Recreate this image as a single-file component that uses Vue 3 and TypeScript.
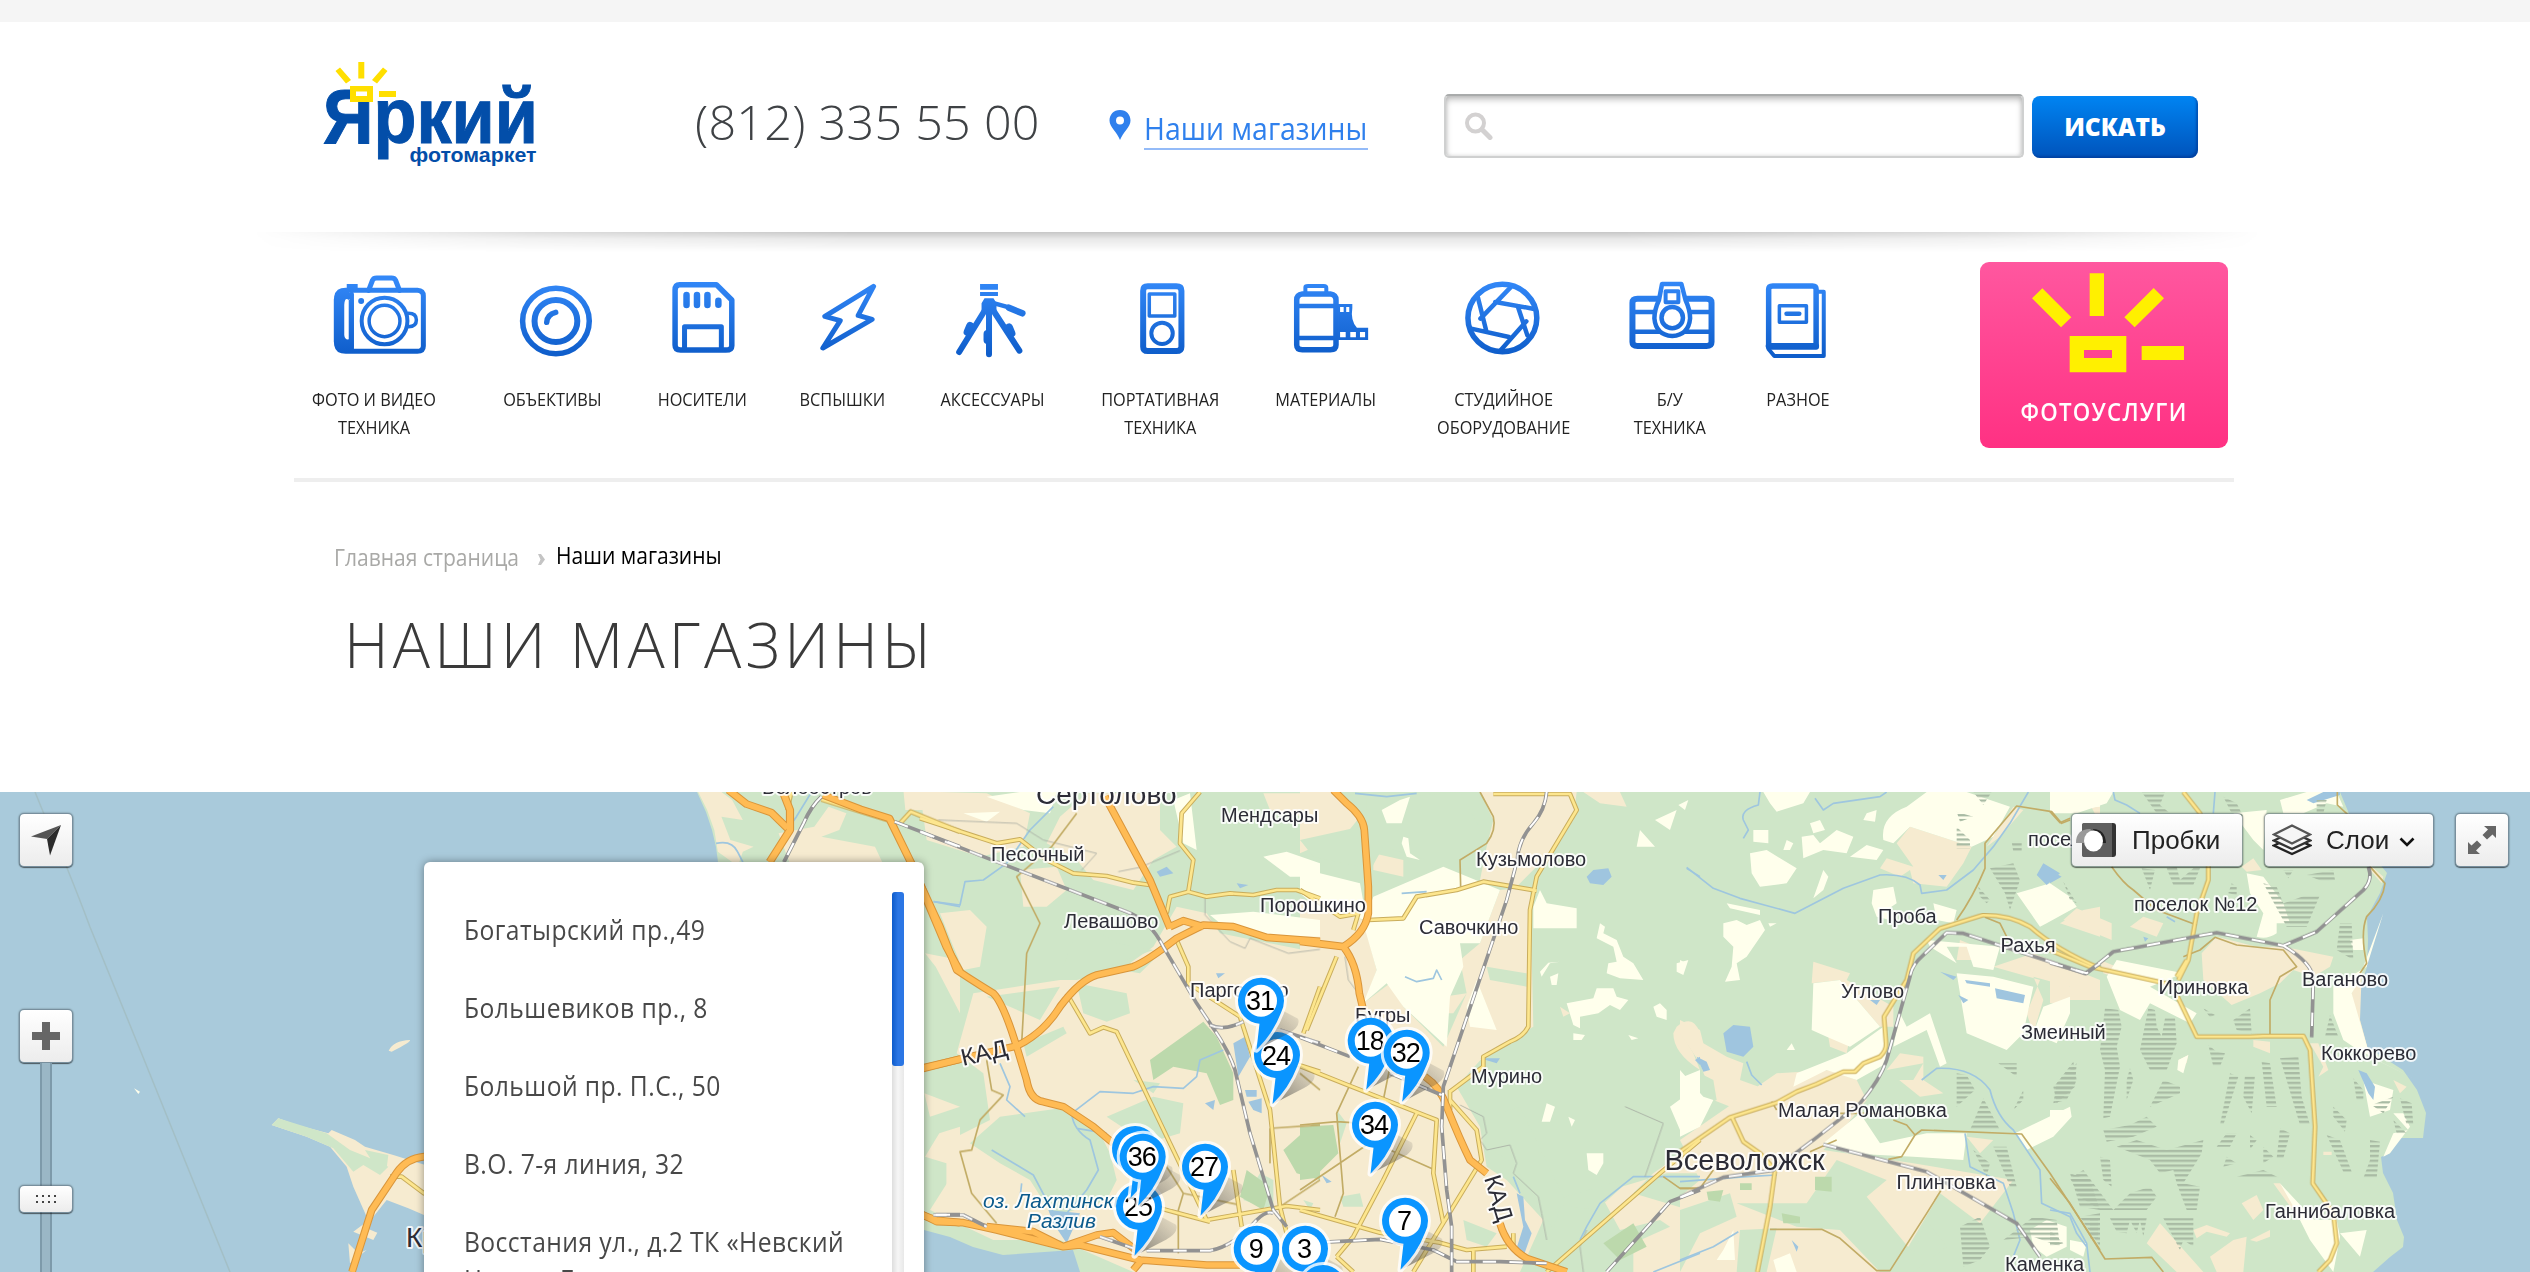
<script setup lang="ts">
interface IconPart {
  d: string
  w?: number
  fill?: string
}
interface Category {
  title: string
  box: string
  parts: IconPart[]
}
interface Sheet {
  at: string
  beige?: string
  green?: string
  cream?: string
  park?: string
  lake?: string
  river?: string
  marsh?: string
  street?: string
  road?: string
  highway?: string
  rail?: string
  border?: string
}

const oval = (x: number, y: number, rx: number, ry: number): string =>
  `M${x - rx} ${y}a${rx} ${ry} 0 1 0 ${rx * 2} 0a${rx} ${ry} 0 1 0 ${-rx * 2} 0Z`

const categories: Category[] = [
  {
    title: 'ФОТО И ВИДЕО ТЕХНИКА',
    box: '68.3 75 201 255',
    parts: [
      { d: 'M112 121H256Q268 122 268 138V288Q268 304 256 304H112Q96 304 94 286V140Q96 121 112 121Z', w: 5 },
      { d: 'M158 121L166 90Q168 84 174 84H204Q210 84 212 90L220 121', w: 5 },
      { d: 'M88 148Q90 118 112 120L128 136L118 150Q110 140 109 165V255Q110 270 118 268V150H128V290L118 306Q90 306 88 275Z', fill: 'ink' },
      { d: 'M114 102H136V121H114Z', fill: 'ink' },
      { d: 'M124 132V300', w: 4.5 },
      { d: oval(143, 153, 6, 9), fill: 'ink' },
      { d: oval(190, 213, 46, 70), w: 4 },
      { d: oval(190, 213, 31, 47), w: 3.5 },
      { d: 'M238 190Q254 190 254 210Q254 230 238 230', w: 3.5 },
    ],
  },
  {
    title: 'ОБЪЕКТИВЫ',
    box: '426.1 75 201 255',
    parts: [
      { d: oval(534.5, 213, 67, 98), w: 5.5 },
      { d: oval(534.5, 213, 43, 63), w: 6 },
      { d: 'M516 217Q517 193 534 187', w: 5.5 },
    ],
  },
  {
    title: 'НОСИТЕЛИ',
    box: '727.6 75 201 255',
    parts: [
      { d: 'M783 104H857L888 150V287Q888 300 876 300H785Q774 300 774 285V120Q774 104 783 104Z', w: 5.5 },
      { d: 'M797 135V165M818 135V165M839 135V165M861 152V164', w: 6.5 },
      { d: 'M793 298V230H867V298', w: 5 },
    ],
  },
  {
    title: 'ВСПЫШКИ',
    box: '1009 75 201 255',
    parts: [{ d: 'M1173 109L1075 199L1106 212L1071 294L1170 208L1142 196Z', w: 5 }],
  },
  {
    title: 'АКСЕССУАРЫ',
    box: '1310.5 75 201 255',
    parts: [
      { d: 'M1387 102H1423V119H1387ZM1387 126H1423V138H1387ZM1396 145H1414L1420 160V186H1390V160Z', fill: 'ink' },
      { d: 'M1397 180L1345 306M1405 180V313M1413 180L1466 302', w: 6 },
      { d: 'M1367 228L1362 246M1402 252V270M1445 232L1450 250', w: 8 },
      { d: 'M1416 160L1445 172', w: 4.5 },
      { d: 'M1445 173L1472 190', w: 6.5 },
    ],
  },
  {
    title: 'ПОРТАТИВНАЯ ТЕХНИКА',
    box: '98 75 196 255',
    parts: [
      { d: 'M172 109H228Q238 109 238 122V290Q238 303 228 303H172Q163 303 163 290V122Q163 109 172 109Z', w: 6 },
      { d: 'M175 132H225V198H175Z', w: 3.5 },
      { d: oval(200, 250, 21, 32), w: 4 },
    ],
  },
  {
    title: 'МАТЕРИАЛЫ',
    box: '423.4 75 196 255',
    parts: [
      { d: 'M475 132H530Q541 134 541 150V285Q541 299 530 299H475Q464 299 464 285V150Q464 134 475 132Z', w: 5.5 },
      { d: 'M464 168H541M464 264H541', w: 4.5 },
      { d: 'M481 130V112Q481 108 486 108H517Q522 108 522 114V130', w: 4 },
      { d: 'M545 162H573V174Q569 212 582 233H604V270H545Z', fill: 'ink' },
      { d: 'M549 171H556V186H549ZM561 171H567V186H561ZM549 246H560V262H549ZM569 246H580V262H569ZM588 246H598V262H588Z', fill: '#fff' },
    ],
  },
  {
    title: 'СТУДИЙНОЕ ОБОРУДОВАНИЕ',
    box: '772.2 75 196 255',
    parts: [
      { d: oval(867, 204, 67.5, 101), w: 5.5 },
      { d: 'M883 112L824 206M853 156L927 176M897 168L916 256M914 214L864 300M880 261L806 236M836 246L819 142', w: 4.5 },
    ],
  },
  {
    title: 'Б/У ТЕХНИКА',
    box: '1097.6 75 196 255',
    parts: [
      { d: 'M1132 146H1267Q1277 146 1277 158V276Q1277 288 1267 288H1132Q1122 288 1122 276V158Q1122 146 1132 146Z', w: 6 },
      { d: 'M1122 186H1277M1122 245H1277', w: 4.5 },
      { d: 'M1180 102H1218L1226 150Q1235 180 1235 205Q1232 255 1200 258Q1168 255 1165 205Q1165 180 1174 150Z', w: 4.5, fill: '#fff' },
      { d: 'M1187 124H1212V157H1187Z', w: 4 },
      { d: oval(1200, 203, 21, 32), w: 4.5 },
    ],
  },
  {
    title: 'РАЗНОЕ',
    box: '1348.5 75 196 255',
    parts: [
      { d: 'M1397 108H1475Q1482 108 1482 118V291H1389V118Q1389 108 1397 108Z', w: 5.5 },
      { d: 'M1389 288H1482', w: 6 },
      { d: 'M1487 125H1497V318H1400L1389 298', w: 4 },
      { d: 'M1410 167H1463V217H1410Z', w: 3.5 },
      { d: 'M1424 191H1449', w: 4.5 },
    ],
  },
]

const shops = ['Богатырский пр.,49', 'Большевиков пр., 8', 'Большой пр. П.С., 50', 'В.О. 7-я линия, 32', 'Восстания ул., д.2 ТК «Невский Центр» Б']

const sheets: Sheet[] = [
  {
    at: 'translate(0 780) scale(.33333)',
    beige:
      'M815 1035L835 1015L890 1035L985 1060L995 1050L1065 1080L1095 1100L1180 1125L1420 1200V1400L1272 1305L1225 1285L1160 1260L1120 1310H1100L1060 1220L1040 1160L990 1100L920 1070ZM1166 812Q1180 782 1230 780Q1235 785 1175 815ZM1060 1355L1100 1325V1345L1132 1358L1120 1380ZM1045 1390L1075 1420L1100 1410L1050 1450Z',
    green: 'M815 1035L835 1015L900 1035L980 1060L1050 1110L1100 1130L1165 1160L1140 1185L1090 1155L1060 1175L1000 1105L920 1070ZM1095 1110L1165 1125L1160 1165L1120 1150Z',
    cream: 'M402 925L420 935L415 942Z',
    road: 'M1170 1190H1205L1272 1240L1400 1290',
    highway: 'M1056 1476L1115 1290L1190 1178Q1220 1135 1272 1130L1400 1120',
  },
  {
    at: 'translate(400 780) scale(.35714 .33333)',
    beige:
      'M835 36H900L930 60L960 120L900 110L925 180L990 200L960 215L950 246H930L890 215L880 150L860 90ZM1060 160L1160 140L1200 80L1250 100L1230 150L1180 170L1330 200L1350 246H1090ZM1410 36H1470V90H1415ZM1470 520L1568 540V700L1500 560ZM1510 1060L1568 1040V1220H1530V1150L1470 1130Z',
    river: 'M885 190Q930 180 945 215L960 246M1150 40L1110 110L1090 140L1060 220M1495 365L1568 380',
    road: 'M1180 58L1365 120M1400 130L1430 95L1568 155M1095 36L1085 90',
    highway: 'M920 30L970 72L1040 98L1085 145M1070 30L1092 90V150L1035 246M1185 45L1290 88L1370 115L1430 246L1530 500L1568 575M1400 880L1568 838M1400 1280L1500 1320L1568 1328',
    rail: 'M1180 50Q1150 80 1130 130L1075 246M1385 125L1568 200M1500 1304H1568',
  },
  {
    at: 'translate(920 780) scale(.33333)',
    beige:
      'M0 36H60L200 40L330 100L310 200L180 230L20 180ZM500 40H720V150L770 200L700 240L640 330L520 300L470 240L380 190L420 110ZM300 270L410 260L440 330L380 380H310ZM60 400L150 390L200 440L180 560L130 570L100 500ZM160 640L420 600L470 600L600 570L700 500L770 380L860 400L900 460L1200 520V1476H640L420 1380H220L30 1290L100 1180L90 1080L210 1020L190 880L110 820ZM13 940L120 980L30 1010ZM1030 40H1200V120L1050 90Z',
    green:
      'M150 1090L240 1010L420 985L530 1040L570 1120L590 1200L560 1260L400 1310L330 1200L240 1150ZM560 1010L700 950L790 970L780 1060L680 1090ZM310 790L430 740L440 760L320 830ZM200 650L420 620L360 720ZM480 420L590 490L700 510L560 560L430 560ZM1020 1180L1060 1200V1290L970 1260ZM480 1405L570 1476H500ZM640 900L720 910L700 940ZM540 560L700 540L660 580ZM470 610L620 640L630 700L560 725L490 700Z',
    park: 'M690 840L850 725L890 770L940 880V960L900 975L860 880L760 860L700 900ZM1090 1110L1180 1030H1200V1200L1130 1180ZM980 1170L1050 1220L1030 1290L960 1250Z',
    cream: 'M200 50L300 36H410L390 100L310 90ZM760 60L810 40L830 210L790 190ZM1030 230L1100 215L1200 250V290L1110 290ZM870 405L1000 395L1200 420V470L1020 465L900 430ZM130 100L240 95L200 125Z',
    lake: 'M940 790L975 770L990 830L955 890ZM710 275L740 260L760 280L720 290ZM975 930H1010V950H980ZM985 965L1025 955V1000L1000 990ZM855 970L885 960L880 990ZM888 580H915L895 595ZM950 310L985 315L960 325ZM385 1290L480 1300L440 1390L400 1330Z',
    river:
      'M40 365L120 375L135 305L190 300L260 250L330 150L400 80M215 1110L340 1185L390 1280L440 1360M455 1000L540 935L640 940L700 920L790 925L830 890L840 840L910 810M455 1000Q460 1050 510 1080L535 1170L500 1230L440 1300M240 850L270 920L260 960L315 1010M300 1255L305 1210M470 1045L560 1060',
    street:
      'M470 100L395 200L290 290L360 430L320 520L305 790M200 840L215 930L250 945L180 1020L155 1110L120 1115L155 1240L230 1330M740 1160L790 1240L960 1275M790 1240L775 1290V1420M730 1290L830 1310M1050 1045L1200 1035M1080 1280L1200 1200M1050 1150V1045M1140 880L1200 930',
    road: 'M0 115L230 190L300 178L380 240L460 280L560 288L640 308L690 315M840 36L785 100L780 190L820 240L805 335L750 350L740 400M805 335L860 350L930 340L1000 345L1070 330L1130 330L1200 355M770 480L805 560V610L960 710L1050 990L1080 1280L1100 1360M440 640L510 760L550 742L590 755L860 1320L1100 1278L1200 1290M940 1170L965 1340M720 1285L870 1325M1120 850L1200 875M1200 620L1150 760',
    highway:
      'M555 50L690 300L750 445M0 310L60 440L110 570Q170 610 220 640Q250 670 290 800L320 900Q330 960 370 965L430 980L520 1040L580 1090M0 868L130 835L260 805L290 798Q370 760 420 680Q480 600 530 585L640 560Q680 545 770 475L850 435L940 440L1040 472L1200 484M0 1300L50 1325L130 1328L230 1350L430 1400L530 1365L580 1358L660 1420M200 1340L340 1355L430 1400L480 1395L660 1440L860 1455H960M640 1470L665 1440M750 440L790 422L850 440',
    rail: 'M0 155L190 230L620 395Q690 420 730 500L830 670L890 760Q930 820 945 870L990 1060L1060 1290L1100 1340M870 735Q910 755 970 725M1080 750L1200 790M40 1305H130L200 1340M680 1412H870Q940 1400 1010 1320Q1040 1290 1060 1300M540 1370L640 1405',
    border: 'M55 120L290 130L370 180L530 220L485 270M595 275L660 262L780 212M855 350V405L930 485L975 505L990 475L1105 520L1200 508',
  },
  {
    at: 'translate(1300 780) scale(.33333)',
    beige:
      'M0 36H120L180 110L140 160L0 220ZM540 36H830L820 120L750 220L650 320L540 300L560 200L580 120ZM220 220L310 240V290L220 270ZM690 320L700 740L550 830L470 920L540 1040L560 1160L620 1200L730 1320L660 1476H0V520L110 510L190 670L270 610L310 680L430 800L500 640L480 540L540 490L600 330ZM0 355L190 420L230 570L190 680L0 600ZM430 650L500 640L460 700L380 700L370 660ZM1200 1040L1130 1130L1060 1180L1000 1240L1200 1300ZM900 1240L1100 1180H1200V1400L1080 1320L960 1350ZM1130 740Q1180 700 1200 760V790Q1170 740 1150 770L1180 820L1200 870Q1120 820 1120 760ZM780 680L810 700L790 710ZM1000 1390L1200 1300V1476H1000ZM850 36H960L980 80L900 70Z',
    green:
      'M120 36L190 140H200V60L480 36L560 180L480 310L430 300L380 240L250 200L200 290V160ZM0 180L180 140V260L40 230ZM560 560L680 580V620L570 600ZM540 1020L660 980L790 1250L760 1350L640 1150L560 1100ZM490 1320L590 1360L560 1400L500 1380ZM120 1250L180 1240L190 1280L130 1280ZM10 1260L40 1270L30 1290ZM110 990L140 1030L120 1090ZM730 1270L1000 1190L890 1290Z',
    park: 'M0 1040L100 1035L115 1120L40 1195L0 1200ZM240 820H270V850H240ZM910 1390L1000 1330L1040 1400L960 1440Z',
    cream:
      'M220 350L430 260L600 330L540 490H480L490 560L450 650L440 800L310 680L260 610L190 670L230 570L190 430ZM0 240L60 280L180 310L200 420L60 390L0 340ZM720 330L740 370L830 385V445L700 445V380ZM310 170L325 175L330 220L360 240L320 230L305 190ZM900 430L915 440L910 460L950 480L970 530L1000 550L1030 600L960 595L920 580L925 550L950 545L940 500L890 475ZM780 545L750 550L725 590L720 575L745 548ZM750 590L775 580L770 615H755ZM800 670L880 655L890 625H940L950 650L985 660L960 690L930 675L895 700L840 710L840 745L820 735ZM1060 680L1080 670L1100 690V720L1070 710ZM860 1120H910V1150L890 1185L865 1170ZM740 970L765 980L750 1025L725 1025ZM805 1010L825 1020L815 1040ZM1130 550L1165 540L1150 585L1130 575ZM820 760L855 765L845 780H820ZM985 765L1015 775L995 780ZM1010 200L1020 150L1065 200ZM1065 120L1130 90L1110 150ZM1135 75L1165 60L1155 90ZM1200 870L1150 890L1165 940L1110 980L1140 1050L1200 1035ZM245 90L300 60L330 50L305 130L260 130ZM530 600L590 750L510 740L500 680Z',
    lake: 'M860 290L880 270L925 265L935 290L910 315L870 310ZM650 1240L670 1250L675 1320L695 1360L670 1430L645 1420L670 1340ZM1185 840L1200 830V855ZM65 1185L95 1205L80 1210ZM540 835H600L590 850Z',
    river:
      'M165 40L260 50L350 40M315 590L350 605L400 595L410 570L425 600M1200 1190L1000 1190L900 1270L860 1340L840 1380M1160 265L1200 290M305 340L380 335M640 1190L660 1240M1060 1476L1200 1420',
    street:
      'M540 36L580 110Q590 150 560 190L480 240L482 320M0 1035L110 1025L190 1030M175 860L110 1000L130 1240L105 1310M0 1230L200 1095L270 1110L405 1170M270 860L250 960M1090 1190L1140 1225L1200 1225',
    road: 'M20 750L110 530M580 42H810L830 90L710 290L690 390L685 740Q670 770 630 785L550 830V860L450 935M0 330L120 410L175 400L160 450M205 420L310 415L350 350L470 330L550 305L710 332M0 858L130 910L410 1020L400 1180L430 1330M350 1000L250 1200L160 1370L110 1430M450 930V990M450 960L530 1050L545 1140L340 1476M0 1290L240 1358L420 1388L500 1410L620 1400M1200 1080L1080 1180L740 1476M110 1430L160 1476M520 1410V1476M640 1400V1360',
    highway: 'M100 30L140 70Q190 110 193 150L205 320V400Q195 460 130 500L0 484M130 500Q170 550 178 640L190 690M375 890Q420 920 440 980Q480 1080 510 1140L560 1180M600 1330Q620 1400 680 1435L800 1476',
    rail: 'M740 36Q735 90 700 130Q655 180 652 240L620 360L430 920L425 1040L440 1230L455 1340V1476M0 772L150 830M270 880L425 945M0 1390L240 1378L400 1410L470 1445H600L740 1450M920 1476L1110 1265L1200 1230',
    border: 'M135 530L145 600L175 640M480 975L550 1010L560 1060L540 1080L560 1110L630 1095L650 1150L640 1180L715 1250L725 1300L740 1380M975 980L1090 1030L1035 1190M860 1350L840 1400L850 1476',
  },
  {
    at: 'translate(1680 780) scale(.33333)',
    beige:
      'M650 190L690 140L875 200L850 250L800 320L700 310L690 270L660 290L600 265L620 235L700 260ZM1000 80L1030 90L960 170L920 200ZM400 545L510 580L500 600L640 680V740L600 740L480 600L395 610ZM0 1080L290 880L450 870L530 900L560 960L480 1060L430 1110L700 1150L1000 1200L900 1330L780 1240L640 1476H0V1250L60 1200ZM0 720L60 750L70 790L140 830L190 850L180 900L290 940L200 1000L100 960L60 850L0 760ZM660 820L730 830V900L790 940L720 950L620 870ZM940 560L1060 520L1260 600V660H1170V620L1060 590L1090 660L1060 760L1040 700L1080 600ZM1115 365L1160 350L1190 380L1150 400ZM1140 430L1210 390L1260 380V470ZM440 740L510 770L500 820L450 800ZM860 1070L940 1080L900 1120ZM1210 36L1260 60V130ZM850 120L890 140L870 160ZM840 480L890 500V540H830Z',
    green: 'M470 1140L620 1200L560 1250L700 1420L740 1320L800 1400L700 1476H600L480 1350L350 1340L170 1270L380 1270ZM620 870L730 850L700 900L610 900ZM0 850L100 900L110 960L40 990L0 930ZM530 1000L610 1040L560 1090ZM180 1350L290 1345L260 1476H170ZM0 1290L150 1240L170 1310L60 1360L0 1476Z',
    park: 'M405 1190H455V1235L405 1230ZM80 1235L130 1230L120 1265L85 1260ZM305 1300L360 1310V1330L310 1330ZM180 1210H215V1230H180Z',
    cream:
      'M210 220L260 210L350 265L320 310L240 320L215 280ZM610 180Q600 110 680 80L740 36H860L990 80L940 170L875 200L690 140L640 190ZM220 150L265 150V190L220 185ZM250 36H390L370 70L290 95L270 70ZM390 130L420 120L435 150L400 160ZM365 170L400 165L420 190L470 150L520 170L500 220L430 210L370 235ZM510 230L560 195L610 210L590 240ZM560 100L590 90L585 125L550 120ZM320 180L340 190L330 210H310ZM580 330L640 320L650 370L620 390L630 420L590 410L575 370ZM140 370L240 390V405L150 385ZM130 430L170 420L200 435L240 420L255 450L200 530L170 550L180 600L135 605L155 560L160 500L130 470ZM400 610L480 600L600 740L510 800L440 770L395 750ZM350 880L500 820L610 740L620 850L530 900L440 870L340 920ZM660 700L680 740L750 700L800 850L780 860L740 750L640 800ZM430 270L445 290L430 330L400 355ZM830 580L940 590L1060 620L1030 760L980 810L860 760ZM1010 340L1110 310L1170 350L1190 380L1100 430L1080 440ZM740 480L960 500L940 570L880 560L860 500H800L830 550L750 500ZM1090 680L1170 650V700L1130 790L1060 760ZM1005 1060L1170 980L1175 1010L1120 1070L1040 1110ZM430 1090L540 1000L600 1090L740 1060L860 1060L850 1140L700 1130L500 1120ZM1110 36H1260V80L1140 90ZM1050 1350L1100 1320L1160 1340V1400L1100 1430L1060 1400ZM265 430H290L270 440ZM0 540L20 550L0 580ZM320 810L335 790L345 810ZM0 870L70 950L100 960L60 1040L0 1070ZM760 370L830 390L820 430L770 420ZM130 1410L160 1350L165 1440H110ZM280 1440L330 1420L350 1476H290Z',
    lake: 'M130 760L160 735L210 740L220 800L190 830L140 815ZM50 830L80 845L90 870L70 875ZM1090 250L1140 280L1100 315L1070 285ZM945 625L1035 645L1030 670L950 655ZM855 600L930 610V620L860 610ZM835 645L865 660L850 670ZM780 575L830 590L820 600ZM775 285L800 285L790 300ZM570 660H600L590 675ZM335 1380L355 1400L350 1415Z',
    river:
      'M240 36L235 75Q180 90 190 120L205 150L190 175M405 55L430 90L460 70L600 50L620 36M20 262L100 325L180 355L345 400L490 325L600 285Q680 280 720 315L725 340L800 330L880 270L940 200L990 130L1045 36M200 845L215 885L245 915M0 1205L200 1190L290 1185M0 1440L100 1400L175 1355M725 900L770 865Q880 860 930 930Q950 1010 1000 1050L1080 1170L1085 1270L1170 1310L1190 1360L1220 1400M855 1060L870 1160L970 1210L1000 1300L1020 1380L1000 1430',
    marsh:
      'M880 36H935L910 75ZM830 95L880 110L840 125ZM830 140L870 180L870 205H830ZM995 185H1025V215H1000ZM930 265L1000 250L1020 300L990 390L975 340ZM895 320L930 360L920 370L900 350ZM1150 305L1190 370L1170 360ZM830 880L860 885L885 930L830 980ZM910 955L960 1050H870ZM1120 970L1130 910L1180 845L1190 900L1160 960ZM940 1100L980 1100L1010 1220H990ZM880 1110L930 1150L920 1190ZM955 850L1010 850V890ZM1000 990L1030 930V960ZM840 1340L900 1310L930 1400L900 1440L850 1460ZM970 1380L1060 1310L1130 1320L1140 1400L1060 1370ZM1170 1180L1230 1200L1260 1290L1200 1280ZM1200 1310L1260 1300V1400Z',
    street:
      'M1170 120L1145 130L1115 95L1010 78L915 190V265Q880 350 830 420M915 412L960 430L985 480M640 1020L680 1035L705 1065L725 1050L1025 1062L1110 1180L1260 1410M705 1065L665 1130L625 1138M270 1348H425L480 1375L590 1472H630L740 1300L790 1220M0 1225H60L100 1170M275 965L290 990M390 1115L470 1080M480 1000H600',
    road: 'M0 1115L150 1012L290 968L350 935L410 912L490 875H525L550 850L600 830Q620 810 618 790L612 710L680 600L700 520L780 445L910 405Q990 405 1050 440Q1130 510 1260 565M155 1010L190 1085L240 1120L285 1170L270 1280L232 1476',
    rail: 'M0 1252L130 1192L280 1170L400 1080L540 970Q600 900 620 840L690 590Q695 555 730 525L800 458L850 460L1110 545L1215 580L1260 550M430 1093L740 1175L1010 1330L1080 1430',
  },
  {
    at: 'translate(2050 780) scale(.33333)',
    beige:
      'M455 520L500 470L620 500L700 500L850 530L840 560L790 590L730 570L690 610L630 640L545 675L460 600ZM280 410L340 430L320 470L240 440ZM40 420L80 385L185 430V480ZM0 560L60 620V670H0ZM5 370L45 350L70 370L40 400ZM575 260L610 235L635 270L590 275ZM905 640L935 580L930 720L960 830L930 790ZM290 1390L330 1330L460 1476H380ZM480 1430L550 1380L590 1370L580 1476H500ZM575 1270L620 1245L640 1290L610 1320ZM430 1350L470 1335L540 1360L530 1370L470 1355L440 1375ZM670 1210H690L750 1290V1320ZM610 780L660 785V820L610 800ZM780 790L805 790L835 870L805 890L820 860ZM600 1380L660 1350V1370L620 1385ZM1030 900L1070 920L1050 940ZM950 245L1000 290L995 310L960 270ZM820 1115H845V1125H820ZM150 540L200 560L190 590L160 580ZM385 840L415 825L410 850Z',
    cream:
      'M0 36H190L170 70L80 100H0ZM590 280L640 290L700 370L720 430L680 430V460Q650 480 620 470L640 400L600 340ZM850 620L950 560L1000 400L940 560L930 600L905 640L960 830L1100 900L1000 850L910 800L880 780L850 700ZM170 590L200 540L400 580L300 620L440 700L420 730L300 670L270 720L210 690ZM550 100L650 90L640 210L610 180ZM690 60L770 36H860L880 80L830 70L760 100H700ZM750 1320L860 1320L870 1370L850 1476L780 1380ZM870 1360L950 1350L930 1430ZM1000 1130L1030 1060L1075 1050L1030 1000L1060 1000L1080 1040L1020 1120ZM900 480L940 475V510H910ZM385 840L415 825L400 880L382 870ZM940 900L1030 930L1020 990L960 1010ZM690 1210L830 1360L800 1400ZM60 1380L110 1390L100 1430L60 1410ZM0 990L60 990L0 1060Z',
    lake: 'M770 60L820 36H870V45L790 70ZM925 870L950 880L975 920L970 960L955 940ZM0 270L35 290L0 310ZM280 470L295 475L285 485Z',
    river: 'M190 36L195 60L230 75L270 100M495 36L490 100M350 410L375 425M0 1290L60 1300L110 1390L120 1476',
    marsh:
      'M275 36H345L330 75L360 100H320ZM520 50L560 70L580 110H550ZM800 60L830 60L820 100H800ZM275 265L315 270L300 330ZM350 265L380 260L390 300L430 265H450L430 315H370ZM640 310L680 320L700 370L770 345H810L770 440H710ZM545 310L560 320V345L535 340ZM700 270H730L715 295ZM770 285L850 270L855 300L820 305ZM870 430L905 430L910 540L860 510ZM165 685L205 690L215 740L200 800L210 860L180 1010L160 1015L165 870L150 810ZM295 685L315 690L320 740L335 770L345 715H375L380 790L350 870H300L270 810ZM240 865L250 900L230 960V900ZM300 980L340 900L390 920V940ZM475 795L500 815L525 820L510 860H490ZM550 720L600 685L605 760L560 750ZM840 705L865 770H825ZM510 1035L540 880L565 890L520 1035H490ZM585 885H615L605 1000L580 950ZM635 845L660 850L680 980H650ZM690 835L745 830L755 950L780 1035H750ZM910 895L940 930V960H920ZM850 980L890 1020L885 1055L850 1010ZM965 975L1030 950L1000 1000ZM1050 955L1085 970L1090 1035H1070ZM830 1065L870 1080L905 1175H880ZM960 1080L990 1085L980 1195H940L960 1140ZM1030 1020L1070 1060H1040ZM160 1050L240 1035L290 1010L320 1040L250 1070L170 1085ZM200 1100L260 1080L350 1110L460 1080L455 1120L400 1210L450 1220L440 1290H410L380 1210L370 1170L330 1180L300 1140ZM150 1130L180 1140L185 1220L160 1200ZM60 1195L100 1170L190 1290L240 1240L300 1220L320 1250L290 1290H150L90 1250ZM500 1100L530 1060H560L540 1100ZM600 1065L620 1080L600 1110ZM690 1045L720 1060L700 1135H680ZM530 1130L560 1150L520 1160ZM470 1195L510 1160ZM560 1190L640 1170L690 1195ZM640 1100L670 1130L640 1150ZM120 1315H145V1375H120ZM180 1315H290L280 1370L270 1320L260 1360L240 1320L230 1360L200 1355ZM340 1315H430V1400L400 1380L390 1410ZM10 920L80 850L75 920L20 970ZM0 1350L40 1390L0 1400ZM460 685L495 705L480 712Z',
    street:
      'M0 95L30 128L60 115M185 260Q220 310 250 330L320 390L440 435M862 36V75L900 110M960 260L1005 310Q1000 360 950 410Q930 460 950 550L930 580M400 530L450 510L495 472L560 495L700 510L740 560L690 590L660 660V770M0 1195L60 1270L165 1437L305 1432L340 1476',
    road: 'M400 36L450 100L475 190V300L440 400L415 540L385 600M380 590L410 540M0 510L120 560L370 615M380 645L440 770H600L640 768H760L780 810L795 1040L788 1210L850 1300L860 1390L840 1440L805 1476',
    rail: 'M0 548L110 580L190 515L500 458L700 497L800 455L940 330Q970 300 955 260M700 497Q790 550 790 600L785 772',
  },
]

type Layer = Exclude<keyof Sheet, 'at'>
const layers: Layer[] = ['beige', 'green', 'cream', 'park', 'lake', 'river', 'marsh', 'border', 'street', 'road', 'highway', 'rail']
const cased: Layer[] = ['road', 'highway', 'rail']

interface Place {
  name: string
  x: number
  y: number
  cls?: string
  turn?: number
}
const places: Place[] = [
  { name: 'Белоостров', x: 762, y: 793.5 },
  { name: 'Сертолово', x: 1036, y: 804, cls: 'town' },
  { name: 'Мендсары', x: 1221, y: 821.5 },
  { name: 'Песочный', x: 991, y: 861 },
  { name: 'Левашово', x: 1064, y: 927.5 },
  { name: 'Порошкино', x: 1260, y: 912 },
  { name: 'Парголово', x: 1190, y: 996.5 },
  { name: 'Бугры', x: 1355, y: 1022 },
  { name: 'Кузьмолово', x: 1476, y: 866 },
  { name: 'Савочкино', x: 1419, y: 933.5 },
  { name: 'Мурино', x: 1471, y: 1083 },
  { name: 'Всеволожск', x: 1664.5, y: 1170, cls: 'town wide' },
  { name: 'Проба', x: 1878, y: 922.5 },
  { name: 'Рахья', x: 2000.5, y: 951.5 },
  { name: 'Углово', x: 1841, y: 998 },
  { name: 'Змеиный', x: 2021, y: 1038.5 },
  { name: 'Малая Романовка', x: 1778, y: 1117 },
  { name: 'Плинтовка', x: 1896.5, y: 1188.5 },
  { name: 'Каменка', x: 2005, y: 1271 },
  { name: 'поселок', x: 2028, y: 846 },
  { name: 'поселок №12', x: 2134, y: 910.5 },
  { name: 'Ириновка', x: 2158.5, y: 993.5 },
  { name: 'Ваганово', x: 2302, y: 986 },
  { name: 'Коккорево', x: 2321, y: 1059.5 },
  { name: 'Ганнибаловка', x: 2265, y: 1217.5 },
  { name: 'оз. Лахтинский', x: 983, y: 1208, cls: 'water-name' },
  { name: 'Разлив', x: 1027, y: 1227.5, cls: 'water-name' },
  { name: 'КАД', x: 963, y: 1066, cls: 'ring-road', turn: -13 },
  { name: 'КАД', x: 1484, y: 1178, cls: 'ring-road', turn: 73 },
  { name: 'Кронштадт', x: 406, y: 1246.5, cls: 'town' },
]

const pins = [
  { n: '24', x: 1277, y: 1055 },
  { n: '31', x: 1261, y: 1000.7 },
  { n: '18', x: 1370.7, y: 1040.7 },
  { n: '32', x: 1406.7, y: 1052.7 },
  { n: '34', x: 1375, y: 1124.7 },
  { n: '25', x: 1139, y: 1206.7 },
  { n: '', x: 1135, y: 1149 },
  { n: '36', x: 1142.7, y: 1156.7 },
  { n: '27', x: 1205, y: 1166.7 },
  { n: '7', x: 1405, y: 1220.7 },
  { n: '9', x: 1256.7, y: 1248.7 },
  { n: '3', x: 1305, y: 1248.7 },
  { n: '', x: 1323, y: 1288 },
]
</script>

<template>
  <div class="page">
    <div class="topbar"></div>
    <header class="header">
      <svg class="logo" viewBox="324 62 212 104">
        <text x="323" y="143" class="logo-name" textLength="215" lengthAdjust="spacingAndGlyphs">Яркий</text>
        <text x="409.500" y="162" class="logo-sub" textLength="127" lengthAdjust="spacingAndGlyphs">фотомаркет</text>
        <path d="M350 86H373V102H350Z" fill="#ffdf00" />
        <path d="M356 91.5H367V96H356Z" fill="#fff" />
        <path d="M379 91H396V97H379ZM358.3 62H364.3V78.5H358.3ZM335.500 71L340 67.500L351 80L346 83.500ZM387.500 71L383 67.500L372 80L377 83.500Z" fill="#ffdf00" />
      </svg>
      <div class="phone">(812) 335 55 00</div>
      <a class="shops-link">
        <svg class="marker" viewBox="0 0 22 30"><path fill-rule="evenodd" d="M11 0C4.500 0 .5 4.700 .5 10.500C.5 17 8 22 11 30C14 22 21.500 17 21.500 10.500C21.500 4.700 17.500 0 11 0ZM11 6.500a4 4 0 1 1 0 8a4 4 0 1 1 0-8Z" fill="#2f80ed" /></svg>
        <span class="shops-text"><span class="narrow">Наши магазины</span></span>
      </a>
      <div class="search">
        <svg viewBox="0 0 28 28" width="29" height="28">
          <circle cx="11" cy="11" r="8.500" fill="none" stroke="#d3d1d1" stroke-width="4" />
          <path d="M17.500 17.500L25.500 25.500" stroke="#d3d1d1" stroke-width="5" stroke-linecap="round" />
        </svg>
      </div>
      <button class="find">ИСКАТЬ</button>
    </header>

    <nav class="nav">
      <div class="nav-shadow"></div>
      <svg class="defs">
        <defs>
          <linearGradient id="ink" gradientUnits="userSpaceOnUse" x1="0" y1="90" x2="0" y2="310">
            <stop offset="0" stop-color="#3388f8" />
            <stop offset="1" stop-color="#0f5ecb" />
          </linearGradient>
        </defs>
      </svg>
      <div class="cats">
        <a v-for="c in categories" :key="c.title" class="cat">
          <svg class="cat-icon" :viewBox="c.box" preserveAspectRatio="none">
            <path
              v-for="(p, i) in c.parts"
              :key="i"
              :d="p.d"
              :fill="p.fill === 'ink' ? 'url(#ink)' : p.fill || 'none'"
              :stroke="p.w ? 'url(#ink)' : 'none'"
              :stroke-width="p.w || 0"
              vector-effect="non-scaling-stroke"
            />
          </svg>
          <span class="cat-title">{{ c.title }}</span>
        </a>
      </div>
      <a class="services">
        <svg class="sun" viewBox="240 66 744 382">
          <path
            fill="#fff000"
            fill-rule="evenodd"
            d="M569 100H612V228H569ZM427 145L514 232L483 262L396 175ZM761 144L792 175L704 262L673 232ZM725 318H852V360H725ZM509 288H679V397H509ZM552 330V354H636V330Z"
          />
        </svg>
        <span class="services-text">ФОТОУСЛУГИ</span>
      </a>
    </nav>

    <main class="intro">
      <div class="crumbs">
        <a class="crumb"><span class="narrow">Главная страница</span></a>
        <svg class="chev" viewBox="0 0 7 11"><path d="M0 0H3L7 5.500L3 11H0L2.500 5.500Z" fill="#c4c4c4" /></svg>
        <span class="here narrow">Наши магазины</span>
      </div>
      <h1 class="title">НАШИ МАГАЗИНЫ</h1>
    </main>

    <section class="map">
      <svg class="canvas" viewBox="0 792 2530 480">
        <defs>
          <pattern id="hatch" patternUnits="userSpaceOnUse" width="30" height="14.600">
            <rect width="30" height="7" fill="#a9bba4" />
          </pattern>
          <linearGradient id="shade" x1="0" y1="1" x2="1" y2="0">
            <stop offset="0" stop-color="#333" stop-opacity=".6" />
            <stop offset="1" stop-color="#555" stop-opacity=".08" />
          </linearGradient>
        </defs>
        <rect x="0" y="792" width="2530" height="480" fill="#a9cadb" />
        <path class="sea-border" d="M35 792L44 814L67 868Q80 900 90 927L143 1057L230 1272" />
        <path
          class="land"
          d="M697 792L706 812L712 830L716 847L718 862L800 1200L924 1230L950 1237L973 1247L1003 1255L1073 1250L1080 1272H2373L2390 1257L2403 1247L2404 1237L2397 1220L2393 1193L2383 1173L2381 1157L2390 1153L2393 1138H2423L2426 1113L2417 1090L2403 1070L2367 1047L2360 1020V987L2367 967L2368 940L2367 917L2380 893L2387 873L2360 840L2340 792Z"
        />
        <g v-for="layer in layers" :key="layer" :class="layer">
          <g v-if="cased.includes(layer)" class="casing">
            <template v-for="s in sheets" :key="s.at">
              <g v-if="s[layer]" :transform="s.at"><path :d="s[layer]" /></g>
            </template>
          </g>
          <g class="core">
            <template v-for="s in sheets" :key="s.at">
              <g v-if="s[layer]" :transform="s.at"><path :d="s[layer]" /></g>
            </template>
          </g>
        </g>
        <text
          v-for="p in places"
          :key="p.name + p.x"
          :x="p.x"
          :y="p.y"
          class="place"
          :class="p.cls"
          :transform="p.turn ? `rotate(${p.turn} ${p.x} ${p.y})` : undefined"
        >{{ p.name }}</text>
        <g v-for="p in pins" :key="p.n + p.x" :transform="`translate(${p.x} ${p.y})`">
          <path d="M-4 49L22 10L37 18Q40 26 27 33Z" fill="url(#shade)" />
          <path class="pin" d="M23 0A23 23 0 1 0 -1.500 23L-4.500 49Q12 33 20 12Q23 6 23 0Z" />
          <circle r="16" fill="#fff" />
          <text class="pin-no" x="-1" y="9.500">{{ p.n }}</text>
        </g>
      </svg>

      <div class="shop-panel">
        <ul class="shops">
          <li v-for="s in shops" :key="s">{{ s }}</li>
        </ul>
        <div class="track"><div class="thumb"></div></div>
      </div>

      <div class="tools-left">
        <button class="ctl square">
          <svg viewBox="0 0 32 32" width="32" height="32"><path d="M31 1L1 12.500L17 15Z" fill="#555" /><path d="M31 1L17 15L20 31.500Z" fill="#2b2b2b" /></svg>
        </button>
        <button class="ctl square plus">
          <svg viewBox="0 0 28 28" width="28" height="28"><path d="M10 0H18V10H28V18H18V28H10V18H0V10H10Z" fill="#666" /></svg>
        </button>
        <div class="zoom-track">
          <div class="ctl zoom-knob">
            <svg viewBox="0 0 20 8" width="20" height="8"><path d="M0 0h2v2h-2zM6 0h2v2h-2zM12 0h2v2h-2zM18 0h2v2h-2zM0 6h2v2h-2zM6 6h2v2h-2zM12 6h2v2h-2zM18 6h2v2h-2z" fill="#444" /></svg>
          </div>
        </div>
      </div>

      <div class="tools-right">
        <button class="ctl traffic">
          <svg viewBox="0 0 40 36" width="40" height="36">
            <rect x="6" y="1" width="34" height="34" rx="3" fill="#333" />
            <path d="M8 1H36V35H8Q6 35 6 33V3Q6 1 8 1Z" fill="#5f5f5f" />
            <path d="M17 7Q29 7 30 21H20Z" fill="#222" />
            <path d="M0 21Q0 7 14 7L18 10L8 21Z" fill="#999" />
            <ellipse cx="17.500" cy="19" rx="9.500" ry="10.500" fill="#fff" />
          </svg>
          <span>Пробки</span>
        </button>
        <button class="ctl layers">
          <svg viewBox="0 0 40 32" width="40" height="32" fill="#f6f6f6" stroke-width="2.400">
            <path d="M2 21.500L20 13L38 21.500L20 30Z" stroke="#222" />
            <path d="M2 16.500L20 8L38 16.500L20 25Z" stroke="#333" />
            <path d="M2 10.500L20 1.500L38 10.500L20 19.500Z" stroke="#555" />
          </svg>
          <span>Слои</span>
          <svg class="caret" viewBox="0 0 16 10" width="16" height="10"><path d="M1.500 1.500L8 8L14.500 1.500" fill="none" stroke="#111" stroke-width="2.600" /></svg>
        </button>
        <button class="ctl square">
          <svg viewBox="0 0 28 28" width="28" height="28"><path d="M28 0V12L24.500 8.500L19 13.500L14.500 9L20 3.500L16 0ZM0 28V16L3.500 19.500L9 14.500L13.500 19L8 24.500L12 28Z" fill="#666" /></svg>
        </button>
      </div>
    </section>
  </div>
</template>

<style>
body {
  margin: 0;
  background: #fff;
  overflow: hidden;
}
</style>

<style scoped>
.page {
  width: 2530px;
  height: 1272px;
  overflow: hidden;
  background: #fff;
  font-family: "Open Sans", "Noto Sans", sans-serif;
  color: #222;
}
.topbar {
  height: 22px;
  background: #f5f5f5;
}
.header {
  display: flex;
  align-items: flex-start;
  height: 210px;
  padding-left: 324px;
}
.narrow {
  display: inline-block;
  transform: scaleX(0.915);
  transform-origin: 0 0;
  white-space: nowrap;
}
.logo {
  width: 212px;
  height: 104px;
  margin-top: 40px;
  overflow: visible;
  flex: none;
}
.logo-name {
  font: bold 78px "Liberation Sans", sans-serif;
  fill: #034ea9;
  stroke: #034ea9;
  stroke-width: 1;
}
.logo-sub {
  font: bold 21px "Liberation Sans", sans-serif;
  fill: #034ea9;
}
.phone {
  width: 350px;
  margin: 69px 0 0 159px;
  font-size: 48.500px;
  font-weight: 300;
  line-height: 60px;
  letter-spacing: 0.250px;
  color: #3f4245;
  white-space: nowrap;
}
.shops-link {
  display: flex;
  width: 260px;
  margin: 85px 0 0 64px;
  color: #2f80ed;
}
.marker {
  width: 22px;
  height: 30px;
  margin: 3px 13px 0 0;
  flex: none;
}
.shops-text {
  width: 224px;
  height: 41px;
  font-size: 31px;
  line-height: 43px;
  border-bottom: 2px solid #94bbf8;
}
.search {
  box-sizing: border-box;
  width: 580px;
  height: 64px;
  margin: 72px 0 0 75px;
  padding: 16px 0 0 18px;
  border: 2px solid #cfd0d0;
  border-top-color: #a9abab;
  border-radius: 5px;
  box-shadow: inset 0 4px 6px rgba(0, 0, 0, 0.22), inset 0 0 4px rgba(0, 0, 0, 0.15);
}
.find {
  width: 166px;
  height: 62px;
  margin: 74px 0 0 8px;
  padding: 0;
  border: 0;
  border-radius: 8px;
  background: linear-gradient(#0084f2, #0053bb);
  box-shadow: inset -2px -2px 2px rgba(0, 50, 140, 0.5);
  color: #fff;
  font: 800 24.500px/62px "Open Sans", sans-serif;
}
.nav {
  position: relative;
  display: flex;
  align-items: flex-start;
  box-sizing: border-box;
  width: 1940px;
  height: 250px;
  margin-left: 294px;
  padding-left: 2px;
  border-bottom: 4px solid #eee;
}
.nav-shadow {
  position: absolute;
  left: -42px;
  top: 0;
  width: 2010px;
  height: 20px;
  background: linear-gradient(rgba(0, 0, 0, 0.22), rgba(0, 0, 0, 0.09) 35%, transparent);
  mask-image: linear-gradient(90deg, transparent, rgba(0, 0, 0, 0.6) 14%, #000 30%, #000 68%, rgba(0, 0, 0, 0.6) 86%, transparent);
}
.defs {
  position: absolute;
  width: 0;
  height: 0;
}
.cats {
  display: grid;
  grid-template-columns: 156px 200px 100px 180px 120px 216px 116px 240px 92px 164px;
  padding-top: 43px;
}
.cat {
  display: flex;
  flex-direction: column;
  align-items: center;
}
.cat-icon {
  width: 100px;
  height: 85px;
  overflow: visible;
  stroke-linejoin: round;
  stroke-linecap: round;
}
.cat-title {
  width: min-content;
  margin-top: 25px;
  font-size: 18px;
  line-height: 28px;
  text-align: center;
  transform: scaleX(0.905);
}
.cat:first-child .cat-title {
  width: 140px;
}
.services {
  display: flex;
  flex-direction: column;
  width: 248px;
  height: 186px;
  margin: 30px 0 0 100px;
  border-radius: 9px;
  background: linear-gradient(#ff579f, #ff3183);
}
.sun {
  width: 248px;
  height: 127.300px;
}
.services-text {
  color: #fff;
  font-size: 26px;
  font-weight: 600;
  letter-spacing: 1.500px;
  line-height: 44px;
  text-align: center;
  transform: scaleX(0.855);
}
.intro {
  height: 310px;
}
.crumbs {
  display: flex;
  padding: 57px 0 0 334px;
  font-size: 23px;
  line-height: 36px;
}
.crumb {
  width: 203px;
  color: #a9a9a7;
}
.chev {
  width: 7px;
  height: 11px;
  margin: 15px 11px 0 1px;
}
.here {
  margin-top: -2px;
  color: #000;
}
.title {
  margin: 29px 0 0 344px;
  font-size: 62px;
  font-weight: 300;
  letter-spacing: 4.150px;
  line-height: 80px;
  color: #3a3a3a;
}
.map {
  position: relative;
  height: 480px;
  overflow: hidden;
}
.canvas {
  display: block;
  width: 2530px;
  height: 480px;
}
.land, .green { fill: #cfe6c8; }
.sea-border { fill: none; stroke: #a3bfc6; stroke-width: 1.500; }
.beige { fill: #f6ebd0; }
.cream { fill: #ffffec; }
.park { fill: #bcd9ac; }
.lake { fill: #9fc5df; }
.marsh { fill: url(#hatch); }
.river, .border, .street, .road, .highway, .rail {
  fill: none;
  stroke-linejoin: round;
}
.river { stroke: #9ec6df; stroke-width: 5; }
.border { stroke: #a3a79f; stroke-width: 3; opacity: 0.75; }
.street { stroke: #c2ac66; stroke-width: 5; }
.road .casing { stroke: #c9ad5c; stroke-width: 14; }
.road .core { stroke: #fde68e; stroke-width: 8; }
.highway .casing { stroke: #d9953a; stroke-width: 23; }
.highway .core { stroke: #ffbb54; stroke-width: 17; }
.rail .casing { stroke: #929292; stroke-width: 11; }
.rail .core { stroke: #fff; stroke-width: 6; stroke-dasharray: 40 40; }
.place {
  font: 20px "Liberation Sans", sans-serif;
  fill: #2c2c36;
  stroke: rgba(255, 255, 255, 0.85);
  stroke-width: 4px;
  stroke-linejoin: round;
  paint-order: stroke;
}
.town { font-size: 28px; }
.wide { font-size: 29px; }
.water-name { font-size: 21px; font-style: italic; fill: #0b5a8c; }
.ring-road { font-size: 24px; }
.pin {
  fill: #0a95ff;
  stroke: rgba(255, 255, 255, 0.8);
  stroke-width: 6px;
  stroke-linejoin: round;
  paint-order: stroke;
}
.pin-no {
  font: 27px "Liberation Sans", sans-serif;
  letter-spacing: -1px;
  text-anchor: middle;
  fill: #000;
}
.shop-panel {
  position: absolute;
  left: 424px;
  top: 70px;
  display: flex;
  justify-content: space-between;
  box-sizing: border-box;
  width: 500px;
  height: 600px;
  padding: 30px 20px 0 40px;
  border-radius: 6px;
  background: #fff;
  box-shadow: 0 0 8px rgba(0, 0, 0, 0.4);
}
.shops {
  flex: none;
  width: 466px;
  margin: 0 -56px 0 0;
  padding: 18px 0 0;
  list-style: none;
  font-size: 28px;
  letter-spacing: 0.500px;
  line-height: 38px;
  color: #484848;
  transform: scaleX(0.88);
  transform-origin: 0 0;
}
.shops li {
  margin-bottom: 40px;
}
.track {
  width: 12px;
  border-radius: 3px;
  background: linear-gradient(90deg, #dedede, #f6f6f6 50%, #e8e8e8);
}
.thumb {
  height: 174px;
  border-radius: 3px;
  background: linear-gradient(90deg, #0d5bcb, #2b76e4 50%);
}
.tools-left {
  position: absolute;
  left: 19px;
  top: 21px;
  display: flex;
  flex-direction: column;
  align-items: center;
}
.ctl {
  display: flex;
  align-items: center;
  box-sizing: border-box;
  height: 54px;
  padding: 0;
  border: 1px solid rgba(80, 95, 105, 0.55);
  border-radius: 5px;
  background: linear-gradient(#fff, #ececec);
  background-clip: padding-box;
  box-shadow: 0 1px 1px rgba(0, 0, 0, 0.5), 0 0 2px rgba(0, 0, 0, 0.4);
  font: 26px "Liberation Sans", sans-serif;
  color: #222;
}
.square {
  width: 54px;
  justify-content: center;
}
.plus {
  margin-top: 142px;
}
.zoom-track {
  display: flex;
  justify-content: center;
  box-sizing: border-box;
  width: 12px;
  height: 260px;
  padding-top: 122px;
  border: solid #7d9aaa;
  border-width: 0 2px;
  background: #9ab7c6;
}
.zoom-knob {
  flex: none;
  justify-content: center;
  width: 54px;
  height: 28px;
}
.tools-right {
  position: absolute;
  right: 21px;
  top: 21px;
  display: flex;
  gap: 21px;
}
.traffic {
  width: 172px;
  padding-left: 4px;
}
.traffic span {
  margin-left: 16px;
}
.layers {
  width: 170px;
  padding-left: 7px;
}
.layers span {
  margin-left: 14px;
}
.caret {
  margin: 4px 0 0 10px;
}
</style>
